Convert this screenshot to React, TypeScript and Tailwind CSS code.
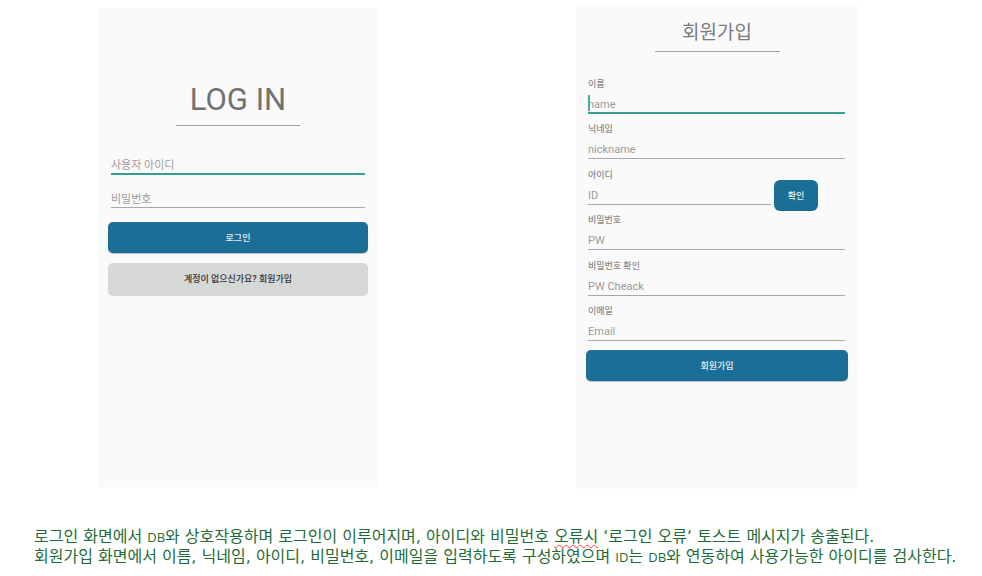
import type { InputHTMLAttributes, ReactNode } from 'react';

const uiFont = "font-[Roboto,'Noto_Sans_CJK_KR',sans-serif]";

function TextInput({ active = false, className = '', ...rest }: { active?: boolean } & InputHTMLAttributes<HTMLInputElement>) {
  return (
    <input
      {...rest}
      className={`w-full min-w-0 bg-transparent text-[11px] text-[#555555] outline-none placeholder:text-[#9c9c9c] ${
        active ? 'border-b-2 border-[#35a08f]' : 'border-b border-[#a8a8a8]'
      } ${className}`}
    />
  );
}

function Field({ id, label, placeholder, type = 'text', active = false, children }: {
  id: string;
  label: string;
  placeholder: string;
  type?: string;
  active?: boolean;
  children?: ReactNode;
}) {
  return (
    <div className="h-[37px]">
      <label htmlFor={id} className="block h-3 text-[9px] leading-[14px] font-medium text-[#8a8a8a]">
        {label}
      </label>
      <div className="flex h-[25px] items-start gap-[3px]">
        <div className="relative flex-1">
          <TextInput id={id} type={type} placeholder={placeholder} active={active} className="block h-[25px] pt-[7px]" />
          {active && <span className="absolute top-[6px] left-0 h-4 w-0.5 bg-[#4aa898]" />}
        </div>
        {children}
      </div>
    </div>
  );
}

function LoginScreen() {
  return (
    <form className="min-h-[479px] bg-[#fafafa] px-[10px] pt-[72px]" onSubmit={(e) => e.preventDefault()}>
      <h1 className="mx-auto h-[46px] w-[124px] border-b border-[#a0a0a0] text-center text-[31px] leading-10 text-[#727272]">
        LOG IN
      </h1>
      <div className="mt-6 flex flex-col gap-2 px-[3px]">
        <TextInput aria-label="사용자 아이디" placeholder="사용자 아이디" active className="h-[25px] pt-[9px]" />
        <TextInput aria-label="비밀번호" type="password" placeholder="비밀번호" className="h-[25px] pt-[9px]" />
      </div>
      <div className="mt-[14px] flex flex-col gap-[10px]">
        <button className="h-[31px] rounded-[5px] bg-[#1b6f96] pt-[3px] text-[9px] font-medium text-[#e3eef3] shadow-[0_1px_1px_rgba(0,0,0,0.25)]">
          로그인
        </button>
        <button type="button" className="h-8 rounded-[5px] bg-[#d6d7d7] pt-[3px] text-[9px] font-medium text-[#333333] shadow-[0_1px_1px_rgba(0,0,0,0.15)]">
          계정이 없으신가요? 회원가입
        </button>
      </div>
    </form>
  );
}

function SignUpScreen() {
  return (
    <form className="min-h-[484px] bg-[#fafafa] px-[10px] pt-[13px]" onSubmit={(e) => e.preventDefault()}>
      <h1 className="mx-auto h-[34px] w-[125px] border-b border-[#a0a0a0] text-center text-[19px] leading-[30px] text-[#7b7b7b]">
        회원가입
      </h1>
      <div className="mt-[25px] flex h-[264px] flex-col justify-between pr-[3px] pl-[2px]">
        <Field id="name" label="이름" placeholder="name" active />
        <Field id="nickname" label="닉네임" placeholder="nickname" />
        <Field id="user-id" label="아이디" placeholder="ID">
          <button type="button" className="mr-[27px] h-[31px] w-11 rounded-[6px] bg-[#1b6f96] pt-[3px] text-[9px] font-medium text-[#e3eef3]">
            확인
          </button>
        </Field>
        <Field id="pw" label="비밀번호" placeholder="PW" type="password" />
        <Field id="pw-check" label="비밀번호 확인" placeholder="PW Cheack" type="password" />
        <Field id="email" label="이메일" placeholder="Email" type="email" />
      </div>
      <button className="mt-[9px] block h-[31px] w-full rounded-[5px] bg-[#1b6f96] pt-[3px] text-[9px] font-medium text-[#e3eef3] shadow-[0_1px_1px_rgba(0,0,0,0.25)]">
        회원가입
      </button>
    </form>
  );
}

function Latin({ children }: { children: string }) {
  return <span className="font-['Open_Sans',sans-serif] text-[13px]">{children}</span>;
}

export default function App() {
  return (
    <main className={`min-h-screen bg-white pt-[5px] ${uiFont}`}>
      <div className="grid grid-cols-[280px_282px] items-center justify-between pr-[124px] pl-[98px]">
        <LoginScreen />
        <SignUpScreen />
      </div>
      <div className="mt-[38px] pl-[34px] font-['DejaVu_Sans','Noto_Sans_CJK_KR',sans-serif] text-[16px] leading-[19px] whitespace-nowrap text-[#1e6b35]">
        <p>
          로그인 화면에서 <Latin>DB</Latin>와 상호작용하며 로그인이 이루어지며, 아이디와 비밀번호{' '}
          <span className="underline decoration-[#ff3b3b] decoration-wavy decoration-1 underline-offset-2">오류시</span> ‘로그인 오류‘ 토스트 메시지가 송출된다.
        </p>
        <p>
          회원가입 화면에서 이름, 닉네임, 아이디, 비밀번호, 이메일을 입력하도록 구성하였으며 <Latin>ID</Latin>는 <Latin>DB</Latin>와 연동하여 사용가능한 아이디를 검사한다.
        </p>
      </div>
    </main>
  );
}
